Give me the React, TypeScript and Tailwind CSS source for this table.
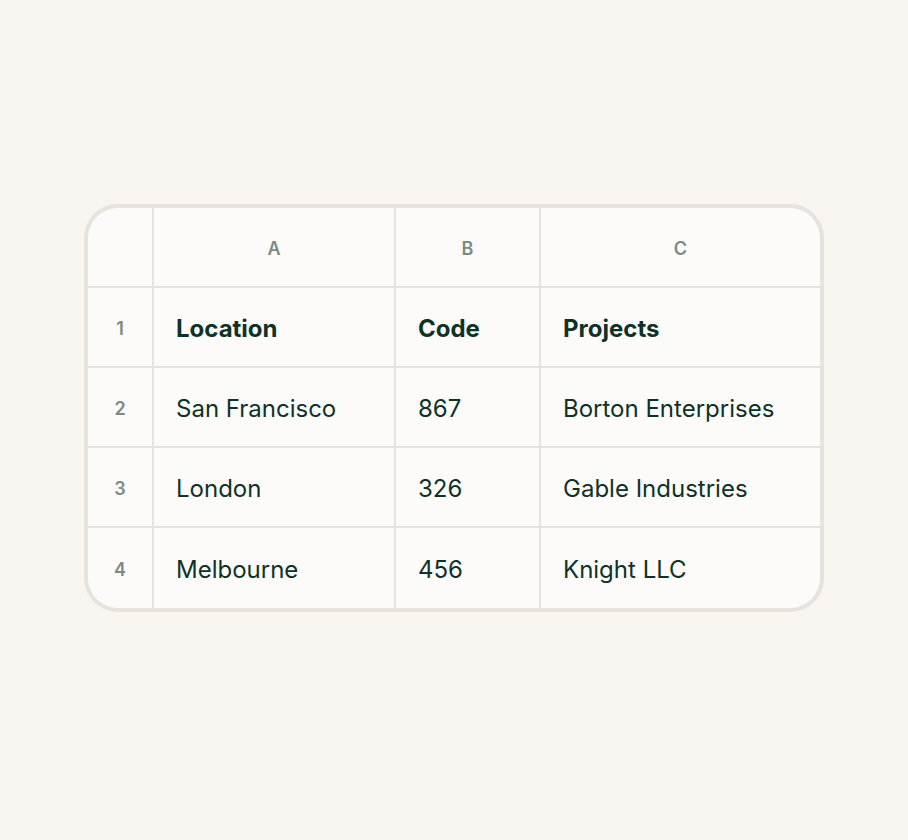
const rows = [
  { n: '1', cells: ['Location', 'Code', 'Projects'], bold: true },
  { n: '2', cells: ['San Francisco', '867', 'Borton Enterprises'] },
  { n: '3', cells: ['London', '326', 'Gable Industries'] },
  { n: '4', cells: ['Melbourne', '456', 'Knight LLC'] },
];

export default function App() {
  return (
    <div
      className="min-h-[840px] w-full bg-[#f8f5f1] pt-[204px] pl-[84px]"
      style={{ fontFamily: 'Inter, "Noto Sans", sans-serif' }}
    >
      <div className="w-fit rounded-[34px] border-4 border-[#e7e2dc] bg-[#e7e2dc] overflow-hidden">
        <div className="grid grid-cols-[64px_240px_143px_279px] grid-rows-[78px_78px_78px_78px_80px] gap-[2px]">
          {/* Column headers */}
          <div className="bg-[#fcfbfa]" />
          {['A', 'B', 'C'].map((c) => (
            <div
              key={c}
              className="bg-[#fcfbfa] flex items-center justify-center pt-[3px] text-[18px] font-semibold text-[#7b8b81]"
            >
              {c}
            </div>
          ))}

          {/* Rows */}
          {rows.map((r) => (
            <>
              <div
                key={r.n}
                className="bg-[#fcfbfa] flex items-center justify-center pt-[3px] text-[18px] font-semibold text-[#7b8b81]"
              >
                {r.n}
              </div>
              {r.cells.map((cell, i) => (
                <div
                  key={r.n + i}
                  className={`bg-[#fcfbfa] flex items-center pl-[22px] pt-[3px] text-[24px] text-[#0e3326] ${
                    r.bold ? 'font-bold' : 'font-normal'
                  }`}
                >
                  {cell}
                </div>
              ))}
            </>
          ))}
        </div>
      </div>
    </div>
  );
}
